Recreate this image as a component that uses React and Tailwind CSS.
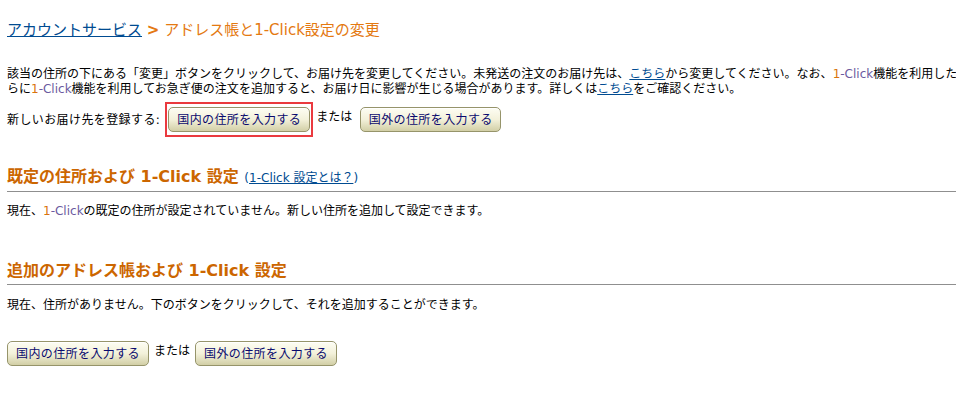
const cjk = { fontFamily: '"DejaVu Sans", "Noto Sans CJK JP", sans-serif' }

function OneClick() {
    return (
        <span><span className="text-[#d9730d]">1</span><span className="text-[#6b5aa0]">-Click</span></span>
    )
}

function YellowButton({ label, width = "w-[142px]" }) {
    return (
        <button className={`${width} h-[25px] rounded-[5px] border border-[#96946a] bg-gradient-to-b from-[#fdfdf3] via-[#f3f1da] to-[#d2cfa6] text-[12px] tracking-[0.4px] text-[#0a0a6e] shadow-[inset_0_1px_0_#ffffff]`}>
            {label}
        </button>
    )
}

function SectionHead({ children }) {
    return (
        <div>
            <h2 className="text-[16px] leading-[20px] font-bold text-[#cc6600]">{children}</h2>
            <div className="mt-[3px] h-px bg-[#8f8f8f]"></div>
        </div>
    )
}

export default function App() {
    return (
        <div className="w-[956px] h-[415px] overflow-hidden bg-white text-black" style={cjk}>
            <div className="w-[1100px] pl-[7px] pt-[20px]">
                {/* breadcrumb */}
                <div className="text-[15px] leading-[20px]">
                    <a href="#" className="text-[#004b91] underline">アカウントサービス</a>
                    <span className="text-[#e47911]"> <b>&gt;</b> アドレス帳と1-Click設定の変更</span>
                </div>

                {/* intro */}
                <p className="mt-[27px] text-[12px] leading-[15px] whitespace-nowrap">
                    該当の住所の下にある「変更」ボタンをクリックして、お届け先を変更してください。未発送の注文のお届け先は、<a href="#" className="text-[#004b91] underline">こちら</a>から変更してください。なお、<OneClick />機能を利用した注文にさ<br />
                    らに<OneClick />機能を利用してお急ぎ便の注文を追加すると、お届け日に影響が生じる場合があります。詳しくは<a href="#" className="text-[#004b91] underline">こちら</a>をご確認ください。
                </p>

                <div className="mt-[5px] flex items-center text-[12px] tracking-[0.4px]">
                    <span className="mr-[5px]">新しいお届け先を登録する:</span>
                    <div className="border-2 border-[#ea3a3f] px-px py-[3px]">
                        <YellowButton label="国内の住所を入力する" />
                    </div>
                    <span className="ml-[3px] mr-[8px] -mt-[6px] tracking-normal">または</span>
                    <YellowButton label="国外の住所を入力する" width="w-[141px]" />
                </div>

                {/* default address */}
                <div className="mt-[30px]">
                    <SectionHead>
                        既定の住所および 1-Click 設定{" "}
                        <span className="text-[12px] font-normal text-[#004b91]">(<a href="#" className="underline">1-Click 設定とは？</a>)</span>
                    </SectionHead>
                    <p className="mt-[12px] text-[12px] leading-[15px]">
                        現在、<OneClick />の既定の住所が設定されていません。新しい住所を追加して設定できます。
                    </p>
                </div>

                {/* address book */}
                <div className="mt-[42px]">
                    <SectionHead>追加のアドレス帳および 1-Click 設定</SectionHead>
                    <p className="mt-[13px] text-[12px] leading-[15px]">
                        現在、住所がありません。下のボタンをクリックして、それを追加することができます。
                    </p>
                </div>

                <div className="mt-[28px] flex items-center text-[12px]">
                    <YellowButton label="国内の住所を入力する" />
                    <span className="mx-[5px] -mt-[6px]">または</span>
                    <YellowButton label="国外の住所を入力する" />
                </div>
            </div>
        </div>
    )
}
